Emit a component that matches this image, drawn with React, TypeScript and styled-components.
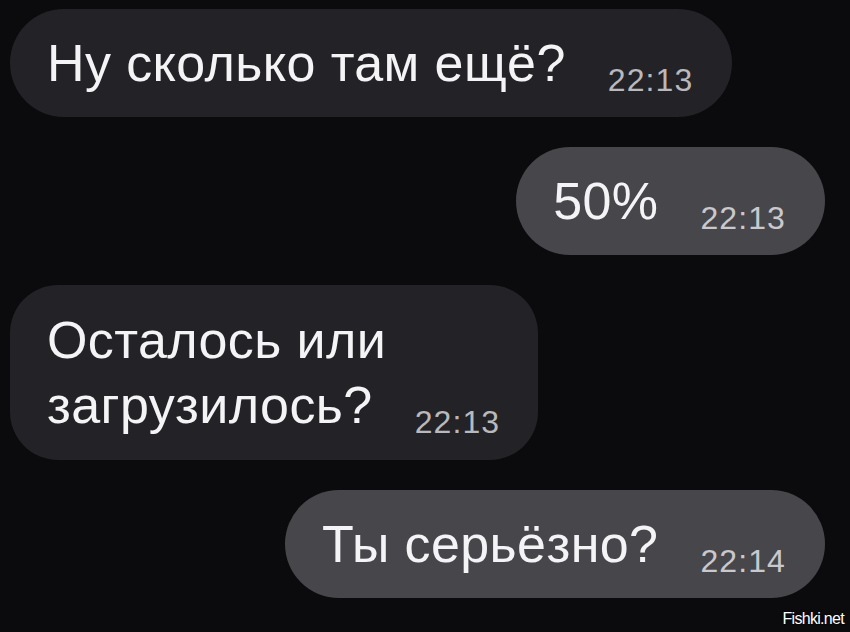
import React from 'react'
import styled, { createGlobalStyle } from 'styled-components'

const GlobalStyle = createGlobalStyle`
  body {
    margin: 0;
    background: #0b0b0d;
    font-family: 'Liberation Sans', Arial, sans-serif;
  }
`

const Screen = styled.div`
  position: relative;
  width: 850px;
  height: 632px;
  overflow: hidden;
  box-sizing: border-box;
  padding: 9px 25px 0 10px;
  display: flex;
  flex-direction: column;
  gap: 30px;
  background: #0b0b0d;
`

const Bubble = styled.div<{ $out?: boolean; $tall?: boolean }>`
  align-self: ${({ $out }) => ($out ? 'flex-end' : 'flex-start')};
  padding: ${({ $tall }) => ($tall ? '22.5px 38px 22.5px 37px' : '21.5px 39px 21.5px 37px')};
  border-radius: ${({ $tall }) => ($tall ? '48px' : '54px')};
  background: ${({ $out }) => ($out ? '#47464b' : '#232226')};
  color: #f4f4f6;
  font-size: 52px;
  line-height: 65px;
  letter-spacing: 0.4px;
  white-space: nowrap;
`

const Time = styled.span<{ $out?: boolean }>`
  display: inline-block;
  margin-left: 42px;
  font-size: 32px;
  line-height: 28px;
  letter-spacing: 1.1px;
  vertical-align: -10px;
  color: ${({ $out }) => ($out ? '#c9c9cd' : '#b9b9bd')};
`

const Watermark = styled.div`
  position: absolute;
  right: 6px;
  bottom: 4px;
  color: #ffffff;
  font-size: 16px;
  letter-spacing: -0.7px;
  text-shadow: 0 0 2px #000;
`

type Message = {
  lines: string[]
  time: string
  out?: boolean
}

const messages: Message[] = [
  { lines: ['Ну сколько там ещё?'], time: '22:13' },
  { lines: ['50%'], time: '22:13', out: true },
  { lines: ['Осталось или', 'загрузилось?'], time: '22:13' },
  { lines: ['Ты серьёзно?'], time: '22:14', out: true },
]

const App: React.FC = () => {
  return (
    <>
      <GlobalStyle />
      <Screen>
        {messages.map((m, i) => (
          <Bubble key={i} $out={m.out} $tall={m.lines.length > 1}>
            {m.lines.map((line, j) => (
              <React.Fragment key={j}>
                {j > 0 && <br />}
                {line}
              </React.Fragment>
            ))}
            <Time $out={m.out}>{m.time}</Time>
          </Bubble>
        ))}
        <Watermark>Fishki.net</Watermark>
      </Screen>
    </>
  )
}

export default App
